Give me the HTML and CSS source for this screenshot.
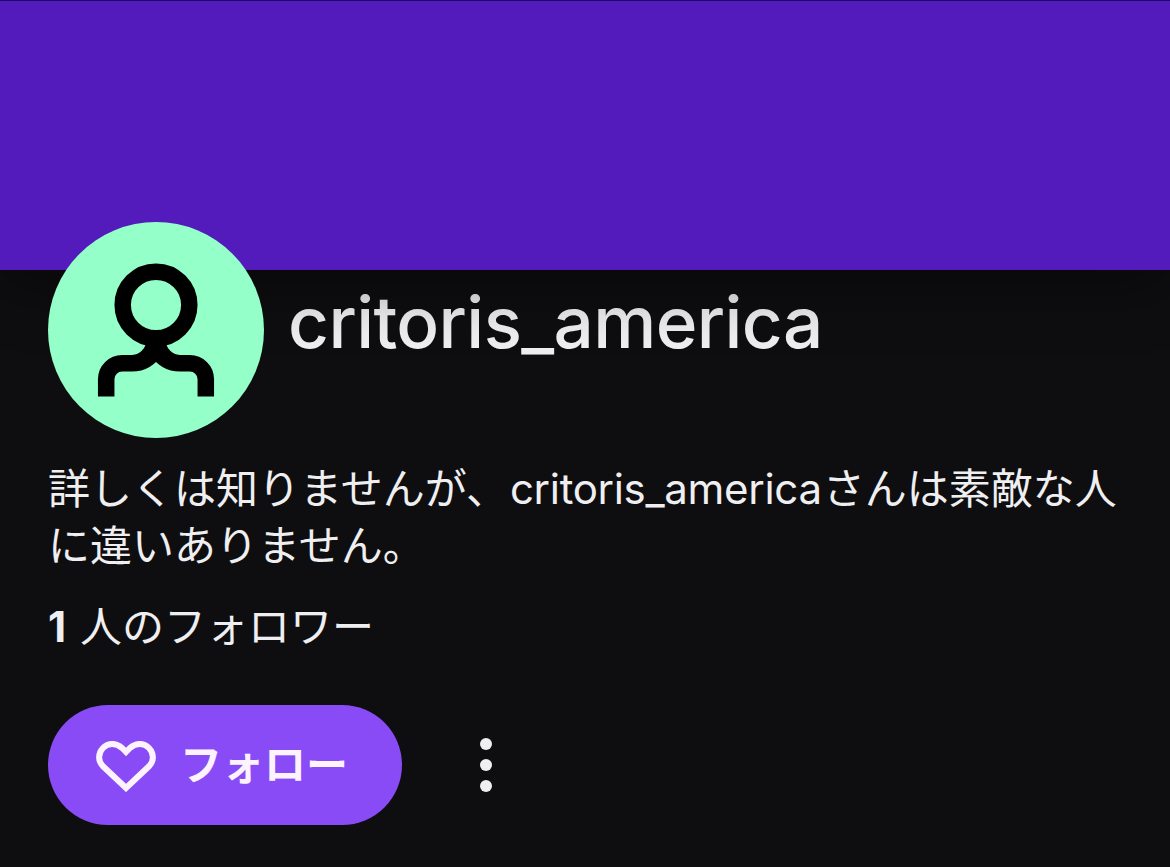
FILE: index.html
```html
<!DOCTYPE html>
<html lang="ja">
<head>
  <meta charset="UTF-8" />
  <meta name="viewport" content="width=device-width, initial-scale=1.0"/>
  <title>critoris_america</title>
  <link rel="stylesheet" href="styles.css">
</head>
<body>
  <div class="banner"></div>

  <main class="profile">
    <header class="profile-header">
      <svg class="avatar" viewBox="0 0 216 216">
        <circle cx="108" cy="108" r="108" fill="#94ffc8"/>
        <g fill="none" stroke="#000" stroke-width="16.5">
          <circle cx="108" cy="83" r="33.3"/>
          <path d="M58.2 174.5V157A16 16 0 0 1 74.2 141.2H84Q99 141.2 108 127"/>
          <path d="M157.8 174.5V157A16 16 0 0 0 141.8 141.2H132Q117 141.2 108 127"/>
        </g>
        <path d="M98 122H118Q121 130 129 133L108 138L87 133Q95 130 98 122Z"/>
      </svg>
      <h1 class="name">critoris_america</h1>
    </header>

    <p class="bio">詳しくは知りませんが、<span class="handle">critoris_america</span>さんは素敵な人に違いありません。</p>
    <p class="followers"><strong>1</strong> 人のフォロワー</p>

    <div class="actions">
      <button class="follow">
        <svg class="heart" viewBox="0 0 60 51" fill="none" stroke="#fcf3ff" stroke-width="6">
          <path d="M30 11L26 7C20 1.600 12 1.600 7 7C1.800 12.500 1.800 20 7 25.300L30 47L53 25.300C58.200 20 58.200 12.500 53 7C48 1.600 40 1.600 34 7Z"/>
        </svg>
        <span class="follow-label">フォロー</span>
      </button>
      <button class="more" aria-label="その他">
        <svg viewBox="0 0 12 54" fill="#efeff1">
          <circle cx="6" cy="6" r="6"/>
          <circle cx="6" cy="27" r="6"/>
          <circle cx="6" cy="48" r="6"/>
        </svg>
      </button>
    </div>
  </main>
</body>
</html>
```
FILE: styles.css
```css
body {
  margin: 0;
  height: 867px;
  overflow: hidden;
  background: #0e0e10;
  color: #efeff1;
  font-family: Inter, 'Noto Sans CJK JP', sans-serif;
}

.banner {
  position: relative;
  z-index: 1;
  box-sizing: border-box;
  height: 270px;
  background: #541bbc;
  border-top: 1px solid #1b0865;
  box-shadow: 0 12px 60px rgba(0, 0, 0, 0.45);
}

.profile {
  padding: 0 48px;
}

.profile-header {
  display: flex;
  gap: 24px;
  height: 216px;
  margin-top: -48px;
}

/* sits over the banner, the name stays under its shadow */
.avatar {
  position: relative;
  z-index: 2;
  flex: none;
  width: 216px;
  height: 216px;
}

.name {
  margin: 55px 0 0;
  font-size: 71px;
  font-weight: 500;
  line-height: 90px;
  letter-spacing: -0.6px;
}

.bio {
  margin: 22px 0 0;
  font-size: 42px;
  line-height: 57px;
}

.handle {
  margin: 0 1px 0 2px;
  letter-spacing: -0.3px;
}

.followers {
  margin: 24px 0 0;
  font-size: 42px;
  line-height: 57px;
}

.followers strong {
  margin-right: 2px;
}

.actions {
  display: flex;
  align-items: center;
  gap: 48px;
  margin-top: 50px;
}

button {
  border: none;
  padding: 0;
  background: none;
  font-family: inherit;
  cursor: pointer;
}

.follow {
  box-sizing: border-box;
  display: flex;
  align-items: center;
  gap: 24px;
  width: 354px;
  height: 120px;
  padding-left: 48px;
  border-radius: 60px;
  background: #884bf5;
  color: #fcf3ff;
  font-size: 42px;
  font-weight: 600;
}

.follow-label {
  padding-bottom: 8px;
}

.heart {
  width: 60px;
  height: 51px;
  margin-top: 2px;
}

.more {
  display: flex;
  align-items: center;
  justify-content: center;
  width: 72px;
  height: 120px;
}

.more svg {
  width: 12px;
  height: 54px;
}
```
